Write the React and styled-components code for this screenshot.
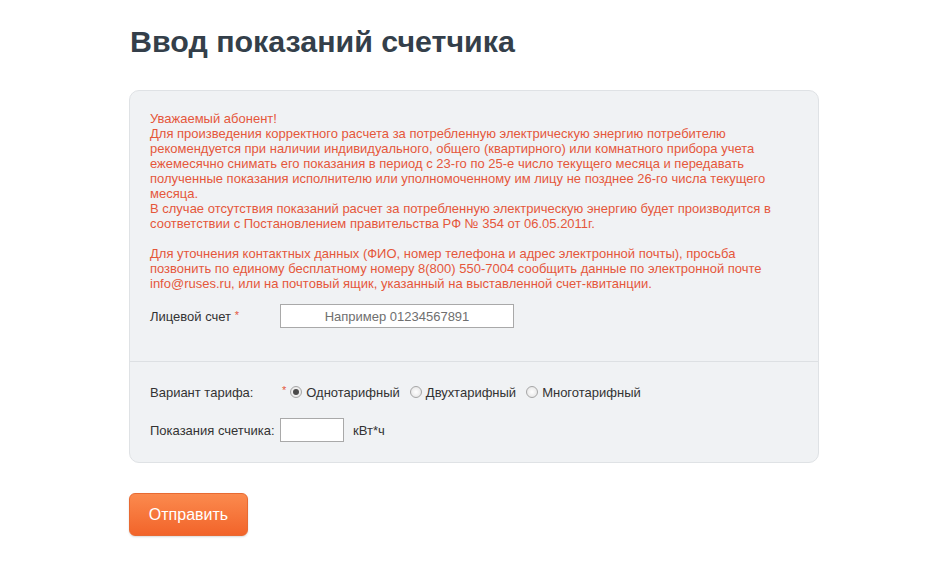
import React from "react";
import styled, { createGlobalStyle } from "styled-components";

const Global = createGlobalStyle`
  html, body { margin: 0; padding: 0; background: #fff; }
  body { font-family: "Liberation Sans", Arial, sans-serif; }
`;

const Page = styled.div`
  padding: 24px 0 40px 129px;
  width: 690px;
`;

const Title = styled.h1`
  margin: 0 0 32px 1px;
  font-size: 30.4px;
  line-height: 34px;
  font-weight: bold;
  color: #343f4a;
`;

const Panel = styled.div`
  background: #f0f2f4;
  border: 1px solid #dfe2e5;
  border-radius: 10px;
`;

const Section = styled.div`
  padding: ${(p) => p.$pad};
  border-top: ${(p) => (p.$divider ? "1px solid #dde0e3" : "none")};
`;

const Notice = styled.p`
  margin: 0 0 13px;
  color: #e5573b;
  font-size: 13px;
  line-height: 15px;
`;

const Row = styled.div`
  display: flex;
  align-items: center;
  height: ${(p) => p.$h || 24}px;
  margin-top: ${(p) => p.$mt || 0}px;
  font-size: 13px;
  color: #333;
`;

const Label = styled.span`
  width: 130px;
  flex: none;
`;

const Star = styled.span`
  color: #e4573d;
  font-size: 11px;
  margin-left: ${(p) => p.$ml || 0}px;
  margin-right: ${(p) => p.$mr || 0}px;
  position: relative;
  top: -2px;
`;

const TextInput = styled.input`
  box-sizing: border-box;
  width: ${(p) => p.$w}px;
  height: ${(p) => p.$h}px;
  border: 1px solid #a9a9a9;
  background: #fff;
  font-family: "Liberation Sans", Arial, sans-serif;
  font-size: 13px;
  text-align: center;
  padding: 0;
  margin: 0;
  outline: none;
  &::placeholder { color: #6f6f6f; }
`;

const RadioOpt = styled.label`
  display: inline-flex;
  align-items: center;
  margin-right: ${(p) => p.$mr}px;
  color: #333;
`;

const RadioDot = styled.span`
  box-sizing: border-box;
  width: 12px;
  height: 12px;
  border-radius: 50%;
  border: 1px solid #a6a6a6;
  background: radial-gradient(circle, #fff 0%, #e0e0e0 100%);
  margin-right: 4px;
  display: inline-flex;
  align-items: center;
  justify-content: center;
  &::after {
    content: "";
    width: 6px;
    height: 6px;
    border-radius: 50%;
    background: ${(p) => (p.$on ? "#4a4a4a" : "transparent")};
  }
`;

const Unit = styled.span`
  margin-left: 9px;
  color: #333;
`;

const Submit = styled.button`
  margin-top: 30px;
  width: 119px;
  height: 43px;
  border: 1px solid #e86a32;
  border-radius: 6px;
  background: linear-gradient(#fb8a4e, #f2642a);
  color: #fff;
  font-family: "Liberation Sans", Arial, sans-serif;
  font-size: 16px;
  box-shadow: 0 1px 2px rgba(0, 0, 0, 0.15);
  cursor: pointer;
`;

export default function App() {
  return (
    <>
      <Global />
      <Page>
        <Title>Ввод показаний счетчика</Title>
        <Panel>
          <Section $pad="20px 20px 33px">
            <Notice>
              Уважаемый абонент!
              <br />
              Для произведения корректного расчета за потребленную электрическую энергию потребителю
              <br />
              рекомендуется при наличии индивидуального, общего (квартирного) или комнатного прибора учета
              <br />
              ежемесячно снимать его показания в период с 23-го по 25-е число текущего месяца и передавать
              <br />
              полученные показания исполнителю или уполномоченному им лицу не позднее 26-го числа текущего
              <br />
              месяца.
              <br />
              В случае отсутствия показаний расчет за потребленную электрическую энергию будет производится в
              <br />
              соответствии с Постановлением правительства РФ № 354 от 06.05.2011г.
              <br />
              <br />
              Для уточнения контактных данных (ФИО, номер телефона и адрес электронной почты), просьба
              <br />
              позвонить по единому бесплатному номеру 8(800) 550-7004 сообщить данные по электронной почте
              <br />
              info@ruses.ru, или на почтовый ящик, указанный на выставленной счет-квитанции.
            </Notice>
            <Row>
              <Label>
                Лицевой счет <Star>*</Star>
              </Label>
              <TextInput $w={234} $h={24} placeholder="Например 01234567891" />
            </Row>
          </Section>
          <Section $divider $pad="18px 20px 20px">
            <Row>
              <Label>Вариант тарифа:</Label>
              <Star $ml={2} $mr={4}>*</Star>
              <RadioOpt $mr={10}>
                <RadioDot $on />
                Однотарифный
              </RadioOpt>
              <RadioOpt $mr={10}>
                <RadioDot />
                Двухтарифный
              </RadioOpt>
              <RadioOpt $mr={0}>
                <RadioDot />
                Многотарифный
              </RadioOpt>
            </Row>
            <Row $h={24} $mt={14}>
              <Label>Показания счетчика:</Label>
              <TextInput $w={64} $h={24} />
              <Unit>кВт*ч</Unit>
            </Row>
          </Section>
        </Panel>
        <Submit>Отправить</Submit>
      </Page>
    </>
  );
}
